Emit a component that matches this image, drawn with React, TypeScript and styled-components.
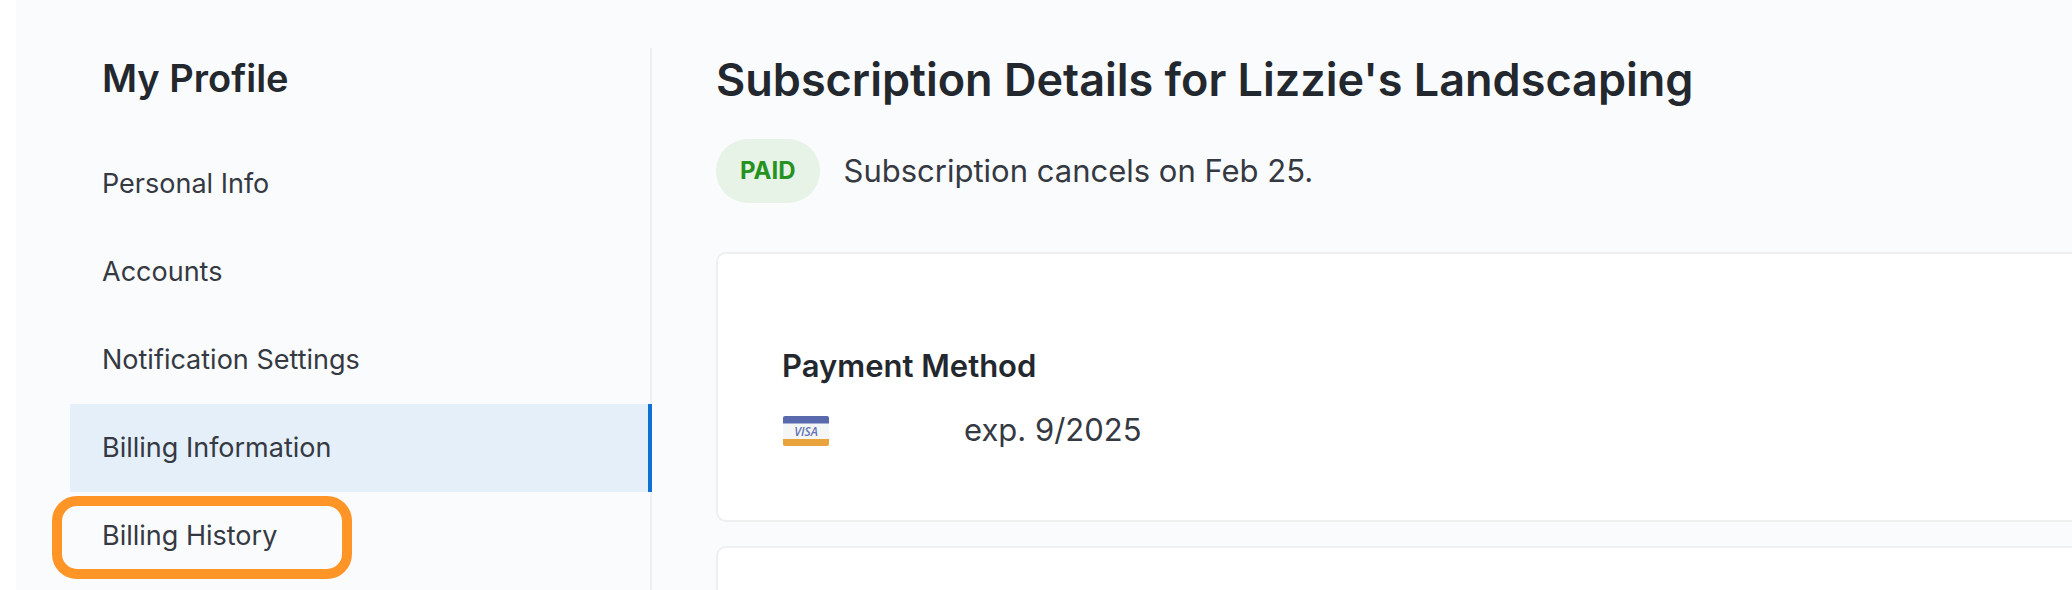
import React from "react";
import styled, { createGlobalStyle, css } from "styled-components";

const color = {
  page: "#fafbfd",
  text: "#23282f",
  body: "#343942",
  line: "#eeefef",
  active: "#e5effa",
  accent: "#0f71d3",
  highlight: "#ff9427",
};

const GlobalStyle = createGlobalStyle`
  *, *::before, *::after { box-sizing: border-box; }
  body {
    margin: 0;
    background: #ffffff;
    color: ${color.text};
    font-family: Inter, "Liberation Sans", sans-serif;
  }
  h1, h2, h3, p, ul { margin: 0; padding: 0; }
`;

const Page = styled.div`
  display: flex;
  min-height: 100vh;
  margin-left: 16px;
  padding: 48px 0 0 54px;
  background: ${color.page};
`;

const Sidebar = styled.aside`
  flex: 0 0 582px;
  border-right: 2px solid ${color.line};
`;

const SidebarTitle = styled.h2`
  padding: 6px 32px 38px;
  font-size: 38px;
  line-height: 48px;
  font-weight: 600;
`;

const NavList = styled.ul`
  list-style: none;
`;

const NavItem = styled.li`
  position: relative;
`;

const NavLink = styled.a<{ $active?: boolean }>`
  display: block;
  padding: 24px 32px;
  font-size: 27px;
  line-height: 40px;
  color: ${color.body};
  text-decoration: none;
  ${({ $active }) =>
    $active &&
    css`
      margin-right: -2px;
      background: ${color.active};
      border-right: 4px solid ${color.accent};
    `}
`;

const HighlightRing = styled.span`
  position: absolute;
  top: 4px;
  left: -18px;
  width: 300px;
  height: 83px;
  border: 10px solid ${color.highlight};
  border-radius: 25px;
  pointer-events: none;
`;

const Content = styled.main`
  flex: 1;
  min-width: 0;
  display: flex;
  flex-direction: column;
  padding-left: 64px;
`;

const Title = styled.h1`
  font-size: 45px;
  line-height: 64px;
  font-weight: 600;
  white-space: nowrap;
`;

const StatusRow = styled.div`
  display: flex;
  align-items: center;
  gap: 24px;
  margin: 27px 0 49px;
`;

const StatusBadge = styled.span`
  padding: 0 24px;
  border-radius: 32px;
  background: #e7f3e6;
  color: #26921f;
  font-size: 24px;
  line-height: 64px;
  font-weight: 700;
`;

const BodyText = styled.p`
  font-size: 31px;
  line-height: 48px;
  color: ${color.body};
`;

const Card = styled.section<{ $last?: boolean }>`
  padding: 88px 64px 66px;
  background: #ffffff;
  border: 2px solid ${color.line};
  border-right: 0;
  border-radius: 10px 0 0 10px;
  ${({ $last }) =>
    $last &&
    css`
      flex: 1;
      min-height: 44px;
      margin-top: 24px;
      padding: 0;
      border-bottom: 0;
      border-radius: 10px 0 0 0;
    `}
`;

const CardTitle = styled.h3`
  font-size: 31px;
  line-height: 48px;
  font-weight: 600;
`;

const PaymentRow = styled.div`
  display: flex;
  align-items: center;
  gap: 134px;
  margin-top: 16px;
`;

const VisaIcon = () => (
  <svg width="48" height="32" viewBox="0 0 48 32" role="img" aria-label="Visa">
    <rect x="1" y="2" width="46" height="30" rx="2" fill="#f4f6f6" />
    <path d="M3 2h42a2 2 0 0 1 2 2v5.500H1V4a2 2 0 0 1 2-2z" fill="#5969ae" />
    <path d="M1 25h46v5a2 2 0 0 1-2 2H3a2 2 0 0 1-2-2z" fill="#e8a33c" />
    <text
      x="24"
      y="22"
      textAnchor="middle"
      fontFamily="Open Sans, sans-serif"
      fontSize="12"
      fontStyle="italic"
      fontWeight="600"
      fill="#6272b6"
    >
      VISA
    </text>
  </svg>
);

const links = [
  { label: "Personal Info", href: "#personal-info" },
  { label: "Accounts", href: "#accounts" },
  { label: "Notification Settings", href: "#notifications" },
  { label: "Billing Information", href: "#billing", active: true },
  { label: "Billing History", href: "#history", highlighted: true },
];

export default function App() {
  return (
    <>
      <GlobalStyle />
      <Page>
        <Sidebar>
          <SidebarTitle>My Profile</SidebarTitle>
          <nav aria-label="My Profile">
            <NavList>
              {links.map((link) => (
                <NavItem key={link.href}>
                  <NavLink
                    href={link.href}
                    $active={link.active}
                    aria-current={link.active ? "page" : undefined}
                  >
                    {link.label}
                  </NavLink>
                  {link.highlighted && <HighlightRing />}
                </NavItem>
              ))}
            </NavList>
          </nav>
        </Sidebar>
        <Content>
          <Title>Subscription Details for Lizzie's Landscaping</Title>
          <StatusRow>
            <StatusBadge>PAID</StatusBadge>
            <BodyText>Subscription cancels on Feb 25.</BodyText>
          </StatusRow>
          <Card>
            <CardTitle>Payment Method</CardTitle>
            <PaymentRow>
              <VisaIcon />
              <BodyText>exp. 9/2025</BodyText>
            </PaymentRow>
          </Card>
          <Card $last />
        </Content>
      </Page>
    </>
  );
}
